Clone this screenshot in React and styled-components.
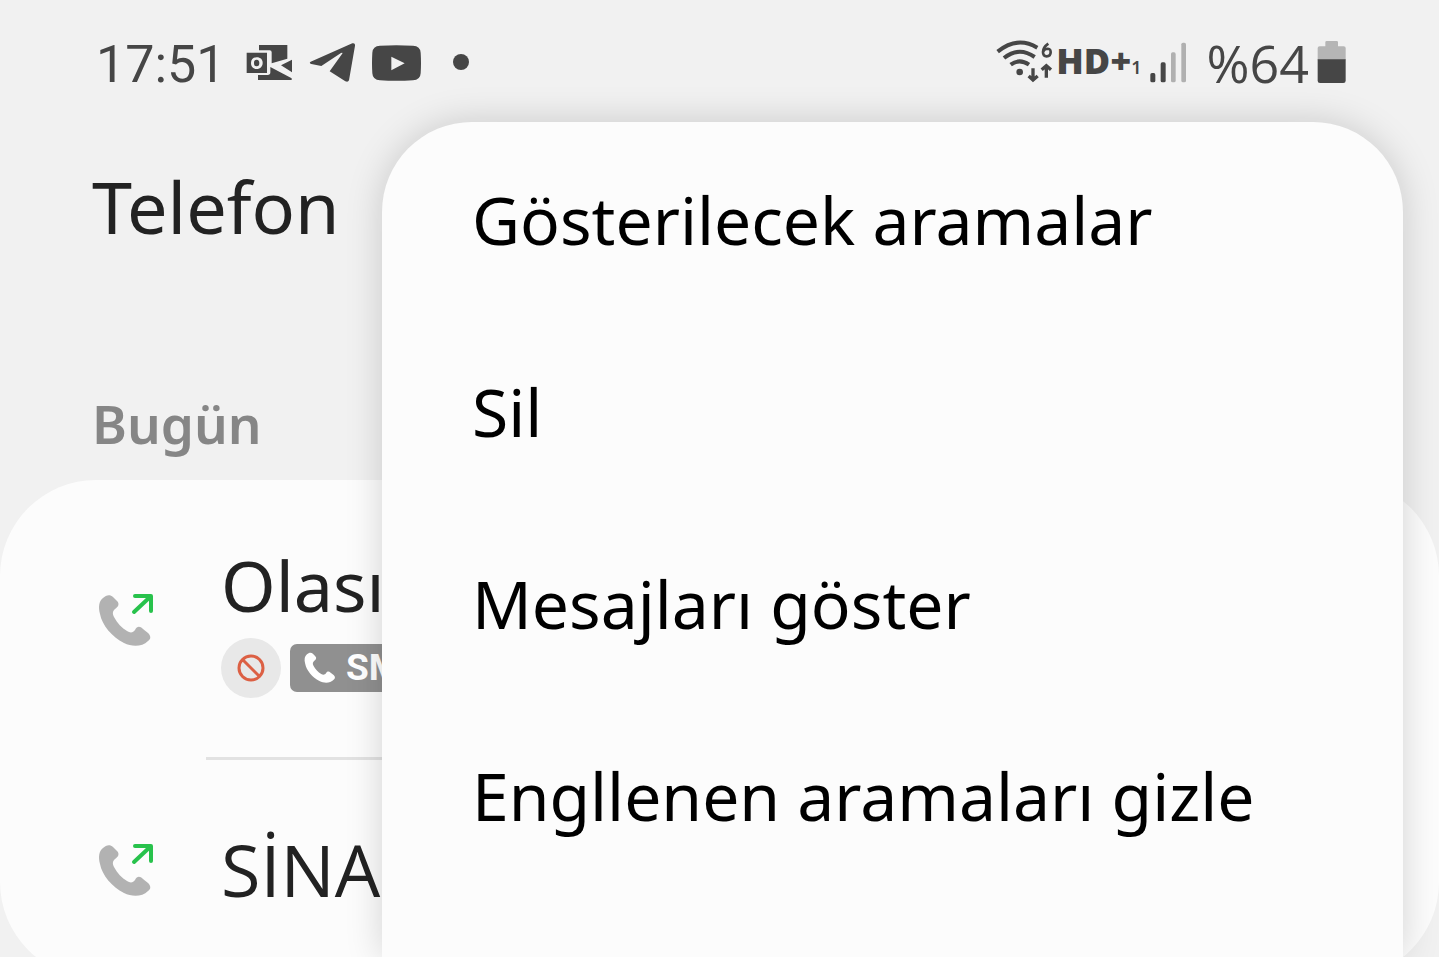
import React from "react";
import styled, { createGlobalStyle } from "styled-components";

const Global = createGlobalStyle`
  * { box-sizing: border-box; }
  body { margin: 0; background: #f1f1f1; font-family: "Noto Sans", "Open Sans", sans-serif; }
  h1, h2, ul { margin: 0; padding: 0; }
  ul { list-style: none; }
`;

const Page = styled.div`
  position: relative;
  height: 100vh;
  overflow: hidden;
`;

const StatusBar = styled.header`
  display: flex;
  justify-content: space-between;
  height: 124px;
  padding: 0 93px 0 96px;
  color: #464646;
`;

const StatusGroup = styled.div`
  display: flex;
  align-items: center;
  height: 126px;
`;

const Clock = styled.time`
  padding-top: 4px;
  font: 400 52px/60px Roboto, sans-serif;
`;

const BatteryLevel = styled.span`
  font: 400 52px/60px "Open Sans", sans-serif;
`;

const Notifications = styled.div`
  display: flex;
  align-items: center;
  gap: 16px;
  margin: 0 12px 0 20px;
`;

const Network = styled.div`
  display: flex;
  align-items: center;
  margin-right: 19px;
`;

const NetworkLabel = styled.span`
  padding-bottom: 4px;
  font: 800 36px/40px "Open Sans", sans-serif;
`;

const SimNumber = styled.span`
  font: 600 18px/20px "Noto Sans", sans-serif;
  padding-top: 8px;
  margin-right: 8px;
`;

const Icon = styled.svg`
  display: block;
  flex: none;
  fill: ${(p) => p.$color || "#464646"};
`;

const Title = styled.h1`
  padding: 33px 92px 0;
  font-size: 72px;
  line-height: 98px;
  font-weight: 400;
  color: #222;
`;

const DayHeading = styled.h2`
  padding: 130px 92px 0;
  font-size: 53px;
  line-height: 78px;
  font-weight: 600;
  color: #868686;
`;

const CallList = styled.ul`
  margin-top: 17px;
  border-radius: 96px;
  background: #fcfcfc;
`;

const CallRow = styled.li`
  display: flex;
  align-items: center;
  height: ${(p) => p.$height}px;
  padding-left: 96px;
`;

const Divider = styled.li`
  height: 3px;
  margin: 0 92px 0 206px;
  background: #e2e2e2;
`;

const CallBody = styled.div`
  margin-left: 63px;
`;

const Caller = styled.div`
  font-family: ${(p) => (p.$open ? '"Open Sans"' : '"Noto Sans"')}, sans-serif;
  font-size: ${(p) => (p.$open ? 72 : 70)}px;
  line-height: 92px;
  color: #222;
`;

const Tags = styled.div`
  display: flex;
  align-items: center;
  gap: 9px;
  margin-top: 7px;
`;

const BlockedTag = styled.span`
  display: grid;
  place-items: center;
  width: 60px;
  height: 60px;
  border-radius: 50%;
  background: #e8e8e8;
`;

const SpamTag = styled.span`
  display: flex;
  align-items: center;
  gap: 10px;
  height: 48px;
  padding: 0 14px;
  border-radius: 7px;
  background: #909090;
  color: #fff;
  font: 700 37px/48px Roboto, sans-serif;
`;

const Menu = styled.div`
  position: absolute;
  top: 122px;
  right: 36px;
  bottom: 0;
  left: 382px;
  padding-top: 1px;
  border-radius: 90px 90px 0 0;
  background: #fcfcfc;
  box-shadow: 0 0 36px rgba(0, 0, 0, 0.17);
`;

const MenuItem = styled.button`
  display: block;
  width: 100%;
  height: 192px;
  padding: 0 90px;
  border: 0;
  background: none;
  color: #000;
  font: 400 66px/90px "Noto Sans", sans-serif;
  text-align: left;
  white-space: nowrap;
`;

const handset =
  "M7 8C10 5 14 4 17 7L21 11C24 14 22 17 19 19C17 21 16 23 18 27C21 33 26 38 31 41C34 43 37 43 39 40C41 36 44 36 47 39L52 43C55 46 55 49 52 51C46 57 36 57 28 53C16 47 6 35 4 24C2 17 3 11 7 8Z";

const OutgoingCall = () => (
  <Icon width="62" height="62" viewBox="0 -2 62 62" $color="#b2b2b2" aria-hidden="true">
    <path d={handset} />
    <path d="M39 6H55V21M54 7L38 22" fill="none" stroke="#28c24c" strokeWidth="4" strokeLinecap="round" strokeLinejoin="round" />
  </Icon>
);

const items = ["Gösterilecek aramalar", "Sil", "Mesajları göster", "Engllenen aramaları gizle"];

export default function App() {
  return (
    <Page>
      <Global />
      <StatusBar>
        <StatusGroup>
          <Clock>17:51</Clock>
          <Notifications>
            <Icon width="47" height="38" viewBox="493 39 141 114" aria-hidden="true">
              <path d="M532 42H617V83L570 97V64Q570 58 564 58H532Z" />
              <path fillRule="evenodd" d="M495 65H556V126H495ZM525 79C514 79 508 86 508 96S514 114 525 114S543 106 543 96S537 79 525 79ZM525 86C531 86 533 90 533 96S531 106 525 106S517 102 517 96S519 86 525 86Z" />
              <path d="M598 103L631 86V124ZM529 132H558Q566 132 566 124V108L630 142V147H529Z" />
            </Icon>
            <Icon width="47" height="42" viewBox="681 40 141 126" aria-hidden="true">
              <path d="M686 99L811 44Q820 42 819 51L801 155Q798 162 790 158L743 128L780 76Q784 70 777 73L718 112L688 106Q680 103 686 99Z" />
            </Icon>
            <Icon width="49" height="36" viewBox="867 42 147 108" aria-hidden="true">
              <path fillRule="evenodd" d="M891 44Q940 41 990 44Q1012 45 1013 65Q1015 97 1013 127Q1012 147 990 148Q940 151 891 148Q869 147 868 127Q866 97 868 65Q869 45 891 44ZM925 77V118L965 97Z" />
            </Icon>
          </Notifications>
          <Icon width="48" height="20" viewBox="0 0 48 20" aria-hidden="true">
            <circle cx="28" cy="9" r="8" />
          </Icon>
        </StatusGroup>
        <StatusGroup>
          <Network>
            <Icon width="60" height="48" viewBox="50 27 180 144" aria-hidden="true">
              <g fill="none" stroke="#464646" strokeWidth="12">
                <path d="M55 65Q114 17 174 53M74 84Q119 48 166 81M94 104Q120 84 149 104" />
                <path d="M161 115V150M148 138L161 150L175 138M201 143V108M187 119L201 107L215 119" strokeWidth="10" />
              </g>
              <circle cx="121" cy="126" r="10" />
              <path d="M207 41Q191 52 191 66C191 75 195 79 202 79S214 74 214 66S209 55 201 57Q195 58 192 64" fill="none" stroke="#464646" strokeWidth="8" />
            </Icon>
            <NetworkLabel>HD+</NetworkLabel>
            <SimNumber>1</SimNumber>
            <Icon width="38" height="42" viewBox="507 36 114 126" aria-hidden="true">
              <rect x="508" y="129" width="15" height="28" rx="5" />
              <rect x="539" y="97" width="15" height="60" rx="5" />
              <rect x="570" y="67" width="14" height="90" rx="5" fill="#b0b0b0" />
              <rect x="601" y="38" width="14" height="119" rx="5" fill="#b0b0b0" />
            </Icon>
          </Network>
          <BatteryLevel>%64</BatteryLevel>
          <Icon width="37" height="44" viewBox="988 32 111 132" aria-hidden="true">
            <path d="M1014 90V53Q1014 48 1020 48H1037V36Q1037 32 1041 32H1071Q1075 32 1075 36V48H1092Q1098 48 1098 53V90Z" fill="#b5b5b5" />
            <path d="M1014 87H1098V151Q1098 158 1091 158H1021Q1014 158 1014 151Z" />
          </Icon>
        </StatusGroup>
      </StatusBar>
      <main>
        <Title>Telefon</Title>
        <DayHeading>Bugün</DayHeading>
        <CallList>
          <CallRow $height={277}>
            <OutgoingCall />
            <CallBody>
              <Caller>Olası</Caller>
              <Tags>
                <BlockedTag>
                  <Icon width="28" height="28" viewBox="0 0 28 28" aria-hidden="true">
                    <path d="M5 5L23 23M14 2A12 12 0 1 0 14 26A12 12 0 1 0 14 2Z" fill="none" stroke="#dc6044" strokeWidth="3" />
                  </Icon>
                </BlockedTag>
                <SpamTag>
                  <Icon width="32" height="32" viewBox="2 4 54 54" $color="#fff" aria-hidden="true">
                    <path d={handset} />
                  </Icon>
                  SM
                </SpamTag>
              </Tags>
            </CallBody>
          </CallRow>
          <Divider aria-hidden="true" />
          <CallRow $height={218}>
            <OutgoingCall />
            <CallBody>
              <Caller $open>SİNA</Caller>
            </CallBody>
          </CallRow>
        </CallList>
      </main>
      <Menu role="menu">
        {items.map((label) => (
          <MenuItem key={label} type="button" role="menuitem">{label}</MenuItem>
        ))}
      </Menu>
    </Page>
  );
}
